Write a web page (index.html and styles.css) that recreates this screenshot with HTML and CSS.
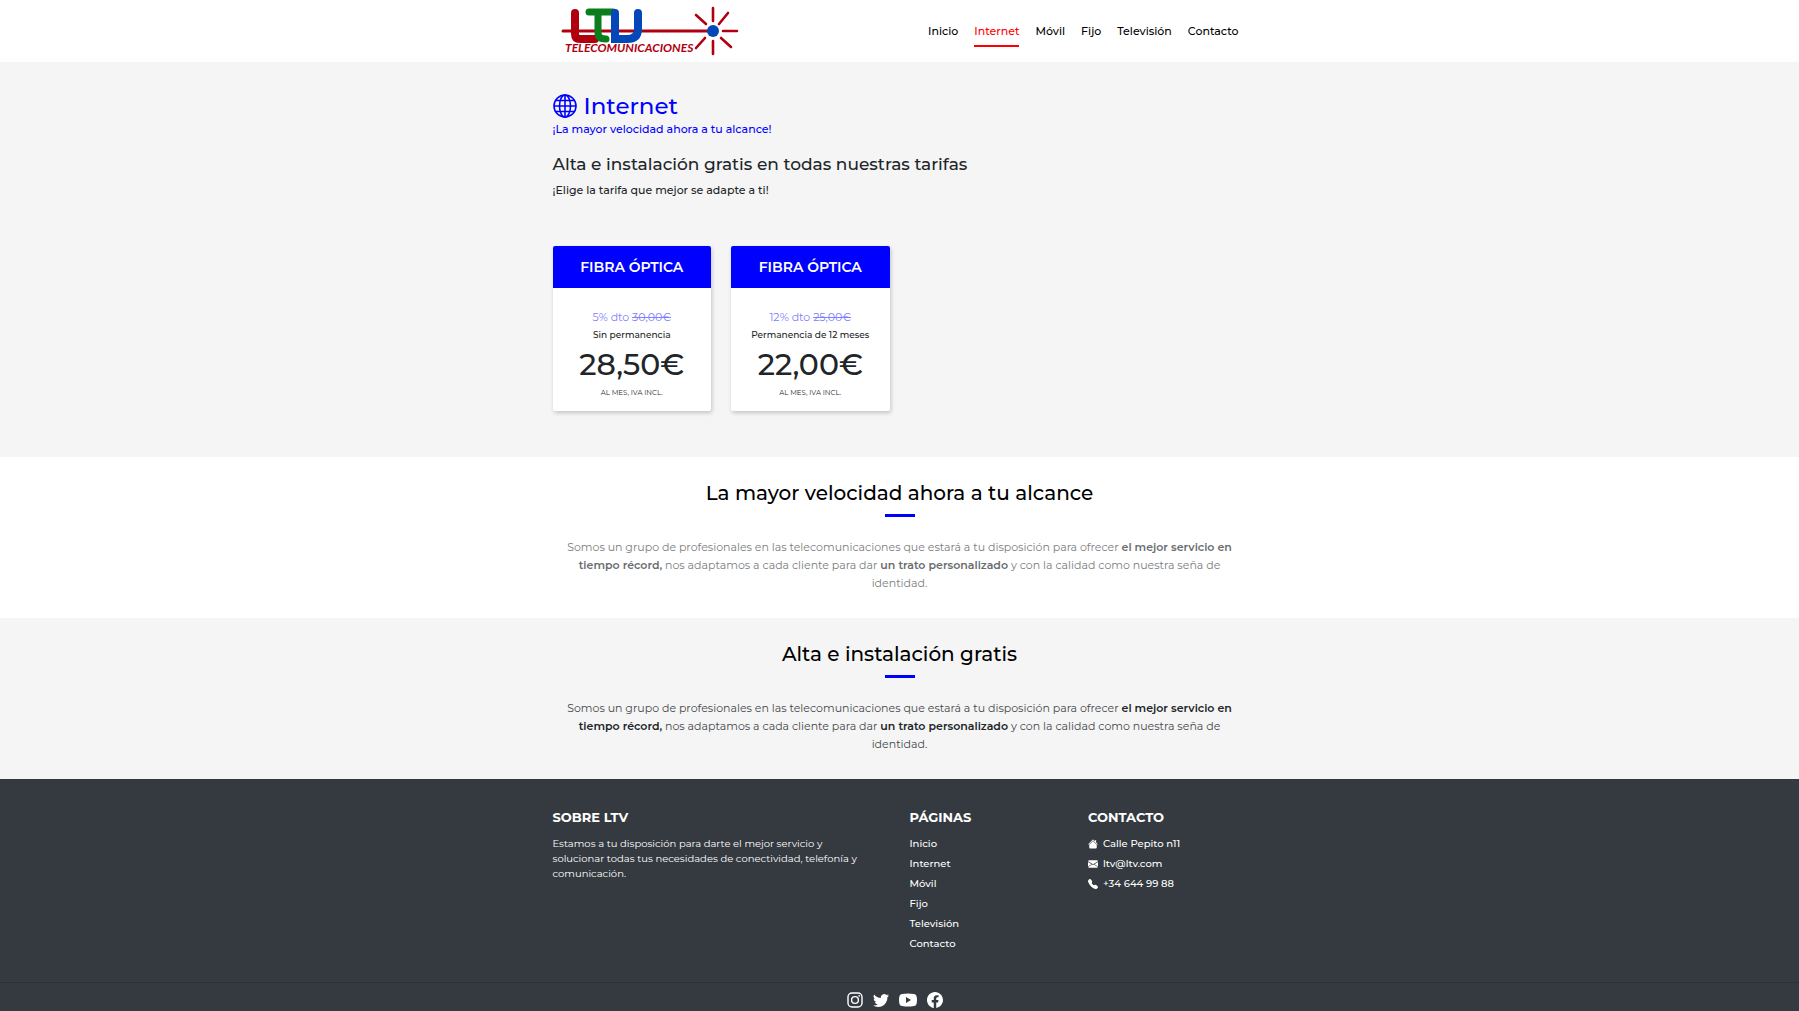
FILE: index.html
```html
<!DOCTYPE html>
<html lang="es">
<head>
<meta charset="utf-8">
<meta name="viewport" content="width=device-width, initial-scale=1">
<title>LTV Telecomunicaciones - Internet</title>
<link rel="stylesheet" href="styles.css">
</head>
<body>
<header class="header">
  <div class="container header-inner">
    <a class="logo" href="#" aria-label="LTV Telecomunicaciones">
      <svg width="192" height="62" viewBox="0 0 192 62">
        <path d="M22 13V34Q22 39 27 39H42" fill="none" stroke="#b00010" stroke-width="8" stroke-linecap="round"/>
        <path d="M10 31H160" stroke="#b00010" stroke-width="3" stroke-linecap="round"/>
        <path d="M36 12H60M45 12V33Q45 39 53 39" fill="none" stroke="#0a7d1c" stroke-width="7" stroke-linecap="round"/>
        <path d="M62 13V39H74Q85 39 85 29V13" fill="none" stroke="#0347b8" stroke-width="8" stroke-linecap="round"/>
        <g stroke="#b00010" stroke-width="2.600" stroke-linecap="round">
          <path d="M160 8V21M160 41V54M170 31H184M143 15L153 24M175 13L166 24M143 48L152 38M178 47L168 38"/>
        </g>
        <circle cx="160" cy="31" r="6" fill="#0347b8"/>
        <text class="logo-text" x="12" y="52">TELECOMUNICACIONES</text>
      </svg>
    </a>
    <nav class="nav" aria-label="Principal">
      <a href="#">Inicio</a>
      <a class="active" href="#">Internet</a>
      <a href="#">Móvil</a>
      <a href="#">Fijo</a>
      <a href="#">Televisión</a>
      <a href="#">Contacto</a>
    </nav>
  </div>
</header>

<main>
  <section class="rates">
    <div class="container">
      <h1 class="title">
        <svg width="24" height="24" viewBox="0 0 24 24" fill="none" stroke="currentColor" stroke-width="1.6"><circle cx="12" cy="12" r="11"/><ellipse cx="12" cy="12" rx="5.5" ry="11"/><path d="M12 1V23M1 12H23M3 6.5H21M3 17.500H21"/></svg>
        Internet
      </h1>
      <p class="tagline">¡La mayor velocidad ahora a tu alcance!</p>
      <h2 class="subtitle">Alta e instalación gratis en todas nuestras tarifas</h2>
      <p class="intro">¡Elige la tarifa que mejor se adapte a ti!</p>
      <div class="cards">
        <article class="card">
          <h3 class="card-head">FIBRA ÓPTICA</h3>
          <div class="card-body">
            <p class="discount">5% dto <s>30,00€</s></p>
            <p class="term">Sin permanencia</p>
            <p class="price">28,50€</p>
            <p class="tax">AL MES, IVA INCL.</p>
          </div>
        </article>
        <article class="card">
          <h3 class="card-head">FIBRA ÓPTICA</h3>
          <div class="card-body">
            <p class="discount">12% dto <s>25,00€</s></p>
            <p class="term">Permanencia de 12 meses</p>
            <p class="price">22,00€</p>
            <p class="tax">AL MES, IVA INCL.</p>
          </div>
        </article>
      </div>
    </div>
  </section>

  <section class="info">
    <div class="container">
      <h2 class="info-title">La mayor velocidad ahora a tu alcance</h2>
      <p class="info-text">Somos un grupo de profesionales en las telecomunicaciones que estará a tu disposición para ofrecer <strong>el mejor servicio en tiempo récord,</strong> nos adaptamos a cada cliente para dar <strong>un trato personalizado</strong> y con la calidad como nuestra seña de identidad.</p>
    </div>
  </section>

  <section class="info info-alt">
    <div class="container">
      <h2 class="info-title">Alta e instalación gratis</h2>
      <p class="info-text">Somos un grupo de profesionales en las telecomunicaciones que estará a tu disposición para ofrecer <strong>el mejor servicio en tiempo récord,</strong> nos adaptamos a cada cliente para dar <strong>un trato personalizado</strong> y con la calidad como nuestra seña de identidad.</p>
    </div>
  </section>
</main>

<footer class="footer">
  <div class="container footer-grid">
    <section class="about">
      <h2 class="footer-title">SOBRE LTV</h2>
      <p class="about-text">Estamos a tu disposición para darte el mejor servicio y solucionar todas tus necesidades de conectividad, telefonía y comunicación.</p>
    </section>
    <section>
      <h2 class="footer-title">PÁGINAS</h2>
      <ul class="footer-list">
        <li><a href="#">Inicio</a></li>
        <li><a href="#">Internet</a></li>
        <li><a href="#">Móvil</a></li>
        <li><a href="#">Fijo</a></li>
        <li><a href="#">Televisión</a></li>
        <li><a href="#">Contacto</a></li>
      </ul>
    </section>
    <section>
      <h2 class="footer-title">CONTACTO</h2>
      <ul class="footer-list">
        <li><svg width="10" height="10" viewBox="0 0 16 16" fill="currentColor"><path d="M8 3.3l6 6V13.500A1.500 1.500 0 0 1 12.500 15h-9A1.500 1.500 0 0 1 2 13.500V9.300z"/><path d="M7.300 1.200a1 1 0 0 1 1.400 0L11 3.500V2h2v3.500l2.700 2.700-.8.800L8 2.200 1.100 9l-.8-.8z"/></svg>Calle Pepito n11</li>
        <li><svg width="10" height="10" viewBox="0 0 16 16" fill="currentColor"><path d="M.05 3.555A2 2 0 0 1 2 2h12a2 2 0 0 1 1.950 1.555L8 8.414zM0 4.697v7.104l5.803-3.558zM6.761 8.830l-6.570 4.027A2 2 0 0 0 2 14h12a2 2 0 0 0 1.808-1.144l-6.570-4.027L8 9.586zm3.436-.586L16 11.801V4.697z"/></svg><a href="#">ltv@ltv.com</a></li>
        <li><svg width="10" height="10" viewBox="0 0 16 16" fill="currentColor"><path d="M1.885.511a1.745 1.745 0 0 1 2.610.163L6.290 2.980c.329.423.445.974.315 1.494l-.547 2.190a.68.68 0 0 0 .178.643l2.457 2.457a.68.68 0 0 0 .644.178l2.189-.547a1.750 1.750 0 0 1 1.494.315l2.306 1.794c.829.645.905 1.870.163 2.611l-1.034 1.034c-.740.740-1.846 1.065-2.877.702a18.600 18.600 0 0 1-7.010-4.420 18.600 18.600 0 0 1-4.420-7.009c-.362-1.030-.037-2.137.703-2.877z"/></svg>+34 644 99 88</li>
      </ul>
    </section>
  </div>
  <div class="social">
    <a href="#" aria-label="Instagram"><svg width="16" height="16" viewBox="0 0 16 16" fill="none" stroke="currentColor" stroke-width="1.400"><rect x="1" y="1" width="14" height="14" rx="4"/><circle cx="8" cy="8" r="3.400"/><circle cx="12.200" cy="3.800" r=".9" fill="currentColor" stroke="none"/></svg></a>
    <a href="#" aria-label="Twitter"><svg width="16" height="16" viewBox="0 0 16 16" fill="currentColor"><path d="M5.026 15c6.038 0 9.341-5.003 9.341-9.334q.002-.211-.006-.422A6.700 6.700 0 0 0 16 3.542a6.700 6.700 0 0 1-1.889.518 3.300 3.300 0 0 0 1.447-1.817 6.500 6.500 0 0 1-2.087.793A3.286 3.286 0 0 0 7.875 6.030a9.320 9.320 0 0 1-6.767-3.429 3.290 3.290 0 0 0 1.018 4.382A3.300 3.300 0 0 1 .640 6.575v.045a3.290 3.290 0 0 0 2.632 3.218 3.200 3.200 0 0 1-.865.115 3 3 0 0 1-.614-.057 3.280 3.280 0 0 0 3.067 2.277A6.600 6.600 0 0 1 .780 13.580a6 6 0 0 1-.780-.045A9.340 9.340 0 0 0 5.026 15"/></svg></a>
    <a href="#" aria-label="YouTube"><svg width="18" height="14" viewBox="0 0 18 14" fill="currentColor"><path fill-rule="evenodd" d="M3 1Q9 0 15 1 18 1 18 7T15 13Q9 14 3 13 0 13 0 7T3 1M7 4V10L12 7Z"/></svg></a>
    <a href="#" aria-label="Facebook"><svg width="16" height="16" viewBox="0 0 16 16" fill="currentColor"><path d="M16 8.049c0-4.446-3.582-8.050-8-8.050C3.580 0-.002 3.603-.002 8.050c0 4.017 2.926 7.347 6.750 7.951v-5.625h-2.030V8.050H6.750V6.275c0-2.017 1.195-3.131 3.022-3.131.876 0 1.791.157 1.791.157v1.980h-1.009c-.993 0-1.303.621-1.303 1.258v1.510h2.218l-.354 2.326H9.250V16c3.824-.604 6.750-3.934 6.750-7.951"/></svg></a>
  </div>
</footer>
</body>
</html>
```
FILE: styles.css
```css
* { box-sizing: border-box; }

body {
  margin: 0;
  min-height: 100vh;
  display: flex;
  flex-direction: column;
  font-family: Montserrat, Inter, "Liberation Sans", sans-serif;
  font-size: 11px;
  line-height: 18px;
  color: #212529;
  background: #fff;
}

h1, h2, h3, p, ul { margin: 0; padding: 0; font-weight: 500; }
ul { list-style: none; }
a { color: inherit; text-decoration: none; }
svg { display: block; flex: none; }

.container {
  width: 100%;
  max-width: 714px;
  margin: 0 auto;
  padding: 0 10px;
}

.header-inner {
  display: flex;
  align-items: center;
  justify-content: space-between;
}
.logo-text {
  font-family: Lato, "Open Sans", sans-serif;
  font-size: 12px;
  font-weight: 700;
  font-style: italic;
  fill: #b00010;
}
.nav { display: flex; gap: 16px; padding-right: 8px; color: #000; font-weight: 500; }
.nav a { padding: 7px 0 5px; border-bottom: 2px solid transparent; }
.nav .active { color: #f00; border-color: #f00; }

.rates { background: #f5f5f5; padding: 30px 0 46px; }
.title {
  display: flex;
  align-items: center;
  gap: 7px;
  font-size: 23px;
  line-height: 28px;
  color: #00f;
}
.tagline { color: #00f; }
.subtitle { margin-top: 14px; font-size: 17px; line-height: 24px; }
.intro { margin-top: 5px; }

.cards {
  display: grid;
  grid-template-columns: repeat(4, 1fr);
  gap: 20px;
  margin-top: 47px;
}
.card {
  background: #fff;
  border-radius: 2px;
  box-shadow: 1px 2px 4px rgba(0, 0, 0, .2);
  overflow: hidden;
  text-align: center;
}
.card-head {
  background: #00f;
  color: #fff;
  font-size: 14px;
  font-weight: 600;
  line-height: 42px;
}
.card-body { padding: 20px 8px 12px; }
.discount { font-weight: 400; color: #8080ff; }
.term { font-size: 9px; }
.price { font-size: 30px; line-height: 42px; }
.tax { font-size: 7px; font-weight: 400; line-height: 13px; }

.info { padding: 24px 0 26px; text-align: center; }
.info-alt { background: #f5f5f5; }
.info-title { font-size: 20px; line-height: 24px; color: #000; }
.info-title::after {
  content: "";
  display: block;
  width: 30px;
  height: 3px;
  margin: 9px auto 21px;
  background: #00f;
}
.info-text { padding: 0 8px; font-weight: 400; color: #7a7d80; }
.info-text strong { font-weight: 600; color: #6a6d70; }
.info-alt .info-text { color: #45484c; }
.info-alt strong { color: #212529; }

.footer { flex: 1; background: #343a40; color: #fff; }
.footer-grid {
  display: grid;
  grid-template-columns: repeat(4, 1fr);
  gap: 20px;
  padding-top: 29px;
  padding-bottom: 28px;
}
.about { grid-column: span 2; padding-right: 20px; }
.footer-title { font-size: 13px; font-weight: 700; }
.about-text { margin-top: 10px; font-size: 10px; font-weight: 400; line-height: 15px; }
.footer-list { margin-top: 8px; font-size: 10px; line-height: 20px; font-weight: 500; }
.footer-list li { display: flex; align-items: center; gap: 5px; }
.social {
  display: flex;
  align-items: center;
  justify-content: center;
  padding: 9px 0 3px;
  border-top: 1px solid #2c3136;
}
.social a { margin-right: 10px; }
```
